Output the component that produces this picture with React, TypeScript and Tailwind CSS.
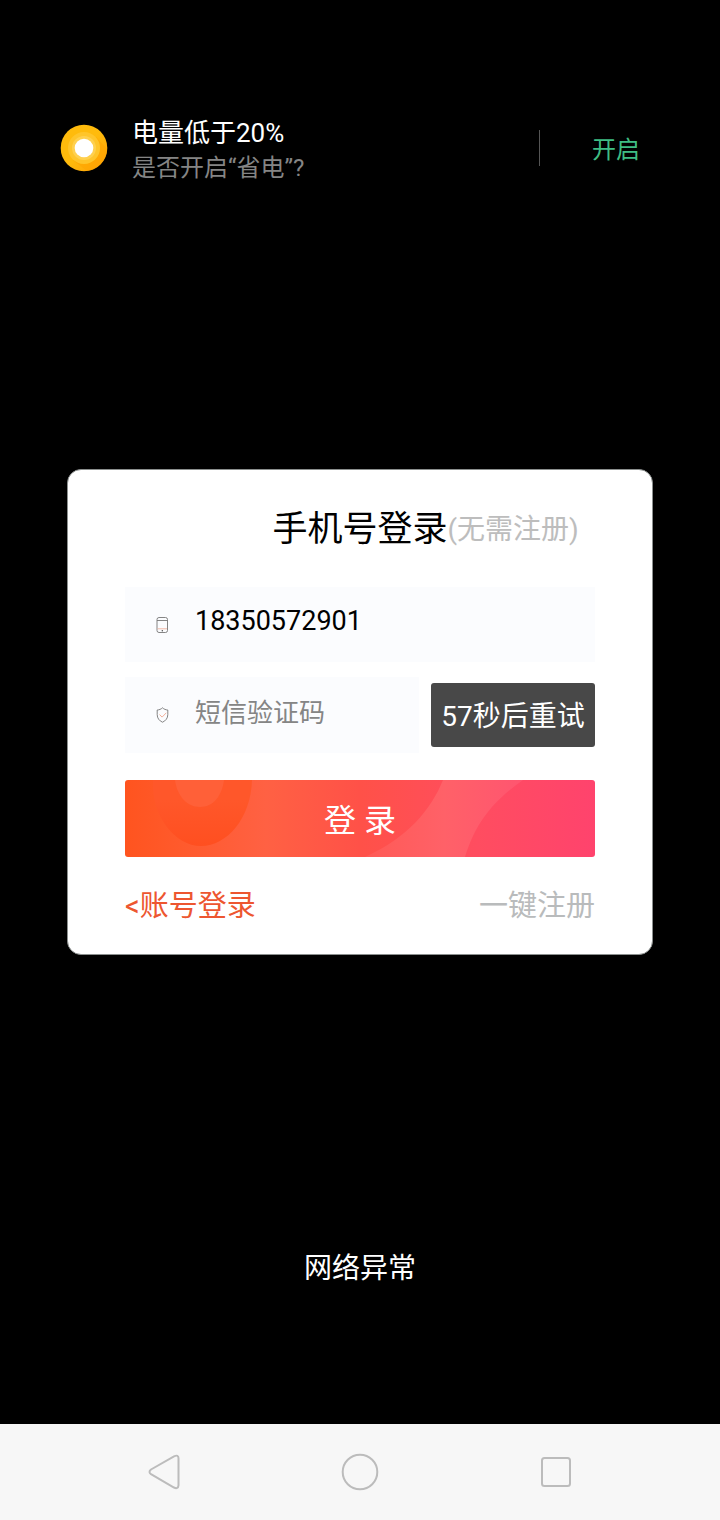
import React, { useState } from 'react';

function BatteryIcon() {
    return (
        <svg viewBox="0 0 48 48" className="h-12 w-12 shrink-0" aria-hidden="true">
            <defs>
                <linearGradient id="sun" x1="0" y1="0" x2="1" y2="1">
                    <stop offset="0.5" stopColor="#ffbb0c" />
                    <stop offset="1" stopColor="#ff9d05" />
                </linearGradient>
            </defs>
            <circle cx="24" cy="24" r="23.3" fill="url(#sun)" />
            <path d="M36 13 47 25A23 23 0 0 1 27 47L13 36Z" fill="#ffa502" opacity="0.6" />
            <circle cx="24" cy="24" r="16" fill="#ffc52a" />
            <circle cx="24" cy="24" r="12" fill="#ffd04e" />
            <circle cx="24" cy="24" r="9.3" fill="#fff" />
        </svg>
    );
}

function PhoneIcon() {
    return (
        <svg viewBox="0 0 14 18" className="h-[18px] w-[14px] shrink-0" fill="none" aria-hidden="true">
            <rect x="2" y="1.5" width="10.5" height="15" rx="2" stroke="#777" strokeWidth="0.9" />
            <path d="M2 4.5h10.5" stroke="#777" strokeWidth="0.9" />
            <path d="M2.5 12.8h9.5" stroke="#eeb09c" strokeWidth="0.9" />
            <circle cx="7.3" cy="14.7" r="0.7" fill="#444" />
        </svg>
    );
}

function ShieldIcon() {
    return (
        <svg viewBox="0 0 14 18" className="h-[18px] w-[14px] shrink-0" fill="none" aria-hidden="true">
            <path
                d="M7.5 1.8C6 3.2 4.3 3.9 2.2 4v4.5c0 3.8 2 6.2 5.3 7.7 3.3-1.5 5.3-3.9 5.3-7.7V4C10.7 3.9 9 3.2 7.5 1.8Z"
                stroke="#777"
                strokeWidth="0.9"
            />
            <path d="m4.500 8.500 2.600 2.600 4.200-4.300" stroke="#f0a78e" strokeWidth="0.9" />
        </svg>
    );
}

// Fond du bouton de connexion
function ButtonArt() {
    return (
        <svg viewBox="0 0 470 77" preserveAspectRatio="none" className="absolute inset-0 h-full w-full" aria-hidden="true">
            <defs>
                <linearGradient id="base" x1="0" y1="0" x2="1" y2="0">
                    <stop offset="0" stopColor="#ff541f" />
                    <stop offset="0.12" stopColor="#ff5a2c" />
                    <stop offset="0.3" stopColor="#ff6143" />
                    <stop offset="0.5" stopColor="#ff5148" />
                    <stop offset="0.75" stopColor="#ff4d60" />
                    <stop offset="1" stopColor="#ff436d" />
                </linearGradient>
                <linearGradient id="band" x1="0" y1="0" x2="1" y2="0">
                    <stop offset="0" stopColor="#ff5a55" />
                    <stop offset="0.5" stopColor="#ff6168" />
                    <stop offset="1" stopColor="#ff5570" />
                </linearGradient>
                <linearGradient id="ring" x1="0" y1="0" x2="0" y2="1">
                    <stop offset="0.3" stopColor="#ff572a" />
                    <stop offset="1" stopColor="#ff4f20" />
                </linearGradient>
            </defs>
            <rect width="470" height="77" fill="url(#base)" />
            <path d="M28 0C26 36 50 66 76 66S126 38 127 0Z" fill="url(#ring)" />
            <path d="M50 0C52 16 62 27 75 27S97 16 99 0Z" fill="#ff6038" />
            <path d="M318 0C306 30 282 58 240 77H340C350 46 364 24 398 0Z" fill="url(#band)" />
        </svg>
    );
}

function Notification() {
    return (
        <header className="flex items-center pl-[60px] pr-20 pt-[110px]">
            <BatteryIcon />
            <div className="ml-6 flex-1 pt-[6px] leading-[35px]">
                <p className="text-[26px] text-white">电量低于20%</p>
                <p className="text-[24px] text-[#858585]">是否开启“省电”?</p>
            </div>
            <div className="h-9 w-px bg-[#555]" />
            <button type="button" className="ml-[52px] pt-1 text-[24px] leading-[34px] text-[#3fbd83]">
                开启
            </button>
        </header>
    );
}

function LoginCard() {
    const [phone, setPhone] = useState('18350572901');
    const [code, setCode] = useState('');

    return (
        <form
            className="w-full rounded-[14px] border border-[#8b8f8e] bg-white px-[57px] pb-7 pt-9"
            onSubmit={(e) => e.preventDefault()}
        >
            <div className="grid grid-cols-[1fr_auto_1fr] items-center leading-[48px]">
                <h1 className="col-start-2 text-[35px] text-black">手机号登录</h1>
                <span className="whitespace-nowrap text-[28px] text-[#bdbdbd]">(无需注册)</span>
            </div>

            <div className="mt-[33px] flex h-[75px] items-center bg-[#fbfcfe] pl-[30px]">
                <PhoneIcon />
                <input
                    type="tel"
                    aria-label="手机号"
                    className="ml-[26px] h-full w-full min-w-0 bg-transparent pb-2 text-[27px] text-black outline-none"
                    value={phone}
                    onChange={(e) => setPhone(e.target.value)}
                />
            </div>

            <div className="mt-[15px] flex items-center gap-3">
                <div className="flex h-[76px] min-w-0 flex-1 items-center bg-[#fbfcfe] pl-[30px]">
                    <ShieldIcon />
                    <input
                        type="text"
                        aria-label="短信验证码"
                        placeholder="短信验证码"
                        className="ml-[26px] h-full w-full min-w-0 bg-transparent pb-1 text-[26px] text-black outline-none placeholder:text-[#858585]"
                        value={code}
                        onChange={(e) => setCode(e.target.value)}
                    />
                </div>
                <button type="button" className="h-16 w-[164px] shrink-0 rounded-[3px] bg-[#484848] pt-1 text-[28px] text-white">
                    57秒后重试
                </button>
            </div>

            <button type="submit" className="relative mt-[27px] block h-[77px] w-full overflow-hidden rounded-[3px] pt-1">
                <ButtonArt />
                <span className="relative text-[32px] text-white">登 录</span>
            </button>

            <div className="mt-[29px] flex justify-between text-[29px] leading-10">
                <a href="#account" className="text-[#ed5630]">&lt;账号登录</a>
                <a href="#register" className="text-[#b9bbbc]">一键注册</a>
            </div>
        </form>
    );
}

function NavBar() {
    return (
        <nav className="grid h-24 grid-cols-3 items-center bg-[#f7f7f7] px-[66px]">
            <button type="button" aria-label="返回" className="flex justify-center">
                <svg viewBox="0 0 40 40" className="h-10 w-10" fill="none" stroke="#bcbcbc" strokeWidth="2">
                    <path d="M7 17.500 30 4.300Q34.500 2.300 34.500 6.300V33.300Q34 37.500 30 35.500L7 22.200Q4 20 7 17.500Z" />
                </svg>
            </button>
            <button type="button" aria-label="主页" className="flex justify-center">
                <svg viewBox="0 0 40 40" className="h-10 w-10" fill="none" stroke="#bcbcbc" strokeWidth="2">
                    <circle cx="20" cy="20" r="17.300" />
                </svg>
            </button>
            <button type="button" aria-label="最近任务" className="flex justify-center">
                <svg viewBox="0 0 40 40" className="h-10 w-10" fill="none" stroke="#bcbcbc" strokeWidth="2">
                    <rect x="6" y="6" width="28" height="28" rx="2.500" />
                </svg>
            </button>
        </nav>
    );
}

export default function App() {
    return (
        <div className="flex min-h-screen flex-col bg-black font-['Roboto','Noto_Sans_CJK_SC',sans-serif]">
            <Notification />
            <main className="flex flex-1 items-center px-[67px]">
                <LoginCard />
            </main>
            <p role="status" className="pb-[137px] pt-[13px] text-center text-[28px] leading-9 text-white">
                网络异常
            </p>
            <NavBar />
        </div>
    );
}
